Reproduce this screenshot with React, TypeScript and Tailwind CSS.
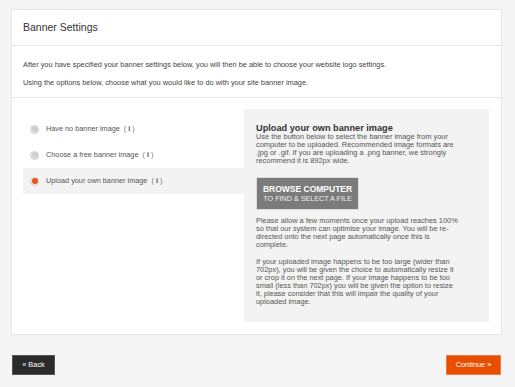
import React from "react";

const Info = () => (
  <span className="ml-[4px] text-[#777]">
    ( <b className="font-bold text-[#555]">i</b> )
  </span>
);

const Radio = ({ selected }: { selected?: boolean }) => (
  <span className="flex h-[9px] w-[9px] items-center justify-center rounded-full border border-[#d2d2d2] bg-[#e6e6e6]">
    <span
      className={
        selected
          ? "h-[6px] w-[6px] rounded-full bg-[#ec5118]"
          : "h-[6px] w-[6px] rounded-full bg-[#cfcfcf]"
      }
    />
  </span>
);

const Option = ({ label, selected }: { label: string; selected?: boolean }) => (
  <div
    className={
      "flex h-[26px] items-center pl-[7px] " + (selected ? "bg-[#f3f3f3]" : "")
    }
  >
    <Radio selected={selected} />
    <span className="ml-[7px] text-[7.3px] text-[#555]">
      {label}
      <Info />
    </span>
  </div>
);

export default function App() {
  return (
    <div
      className="min-h-screen bg-[#f5f5f5] pl-[11px] pr-[13px] pt-[9px]"
      style={{ fontFamily: '"Liberation Sans", Arial, sans-serif' }}
    >
      <div className="border border-[#e6e6e6] bg-white">
        <div className="flex h-[36px] items-center border-b border-[#e6e6e6] px-[11px]">
          <h1 className="text-[10.5px] text-[#333]">Banner Settings</h1>
        </div>
        <div className="border-b border-[#e6e6e6] px-[11px] pb-[10px] pt-[15px] text-[7.4px] leading-[8px] text-[#444]">
          <p>
            After you have specified your banner settings below, you will then be
            able to choose your website logo settings.
          </p>
          <p className="mt-[10px]">
            Using the options below, choose what you would like to do with your
            site banner image.
          </p>
        </div>
        <div className="flex pb-[12px] pt-[11px] pl-[11px] pr-[12px]">
          <div className="w-[221px] pt-[7px]">
            <Option label="Have no banner image" />
            <Option label="Choose a free banner image" />
            <Option label="Upload your own banner image" selected />
          </div>
          <div className="flex-1 bg-[#f3f3f3] pb-[16px] pl-[12px] pt-[14px] text-[#555]">
            <h2 className="text-[9.2px] font-bold leading-[10px] text-[#333]">
              Upload your own banner image
            </h2>
            <p className="text-[7.4px] leading-[8px]">
              Use the button below to select the banner image from your
              <br />
              computer to be uploaded. Recommended image formats are
              <br />
              .jpg or .gif. If you are uploading a .png banner, we strongly
              <br />
              recommend it is 892px wide.
            </p>
            <div className="mt-[12px] flex h-[33px] w-[103px] flex-col items-center justify-center border border-[#dcdcdc] bg-[#7b7b7b] text-white">
              <span className="text-[8.5px] font-bold leading-[10px]">
                BROWSE COMPUTER
              </span>
              <span className="mt-[1px] text-[7.2px] leading-[8px] text-[#eee]">
                TO FIND &amp; SELECT A FILE
              </span>
            </div>
            <p className="mt-[7px] text-[7.4px] leading-[8px]">
              Please allow a few moments once your upload reaches 100%
              <br />
              so that our system can optimise your image. You will be re-
              <br />
              directed onto the next page automatically once this is
              <br />
              complete.
            </p>
            <p className="mt-[9px] text-[7.4px] leading-[8px]">
              If your uploaded image happens to be too large (wider than
              <br />
              702px), you will be given the choice to automatically resize it
              <br />
              or crop it on the next page. If your image happens to be too
              <br />
              small (less than 702px) you will be given the option to resize
              <br />
              it, please consider that this will impair the quality of your
              <br />
              uploaded image.
            </p>
          </div>
        </div>
      </div>
      <div className="mt-[20px] flex items-center justify-between pl-[1px]">
        <button className="flex h-[20px] w-[43px] items-center justify-center border border-[#555] bg-[#2b2b2b] text-[7.4px] text-white">
          « Back
        </button>
        <button className="mr-[1px] flex h-[20px] w-[55px] items-center justify-center border border-[#f07a4a] bg-[#e84e00] text-[7.4px] text-white">
          Continue »
        </button>
      </div>
    </div>
  );
}
